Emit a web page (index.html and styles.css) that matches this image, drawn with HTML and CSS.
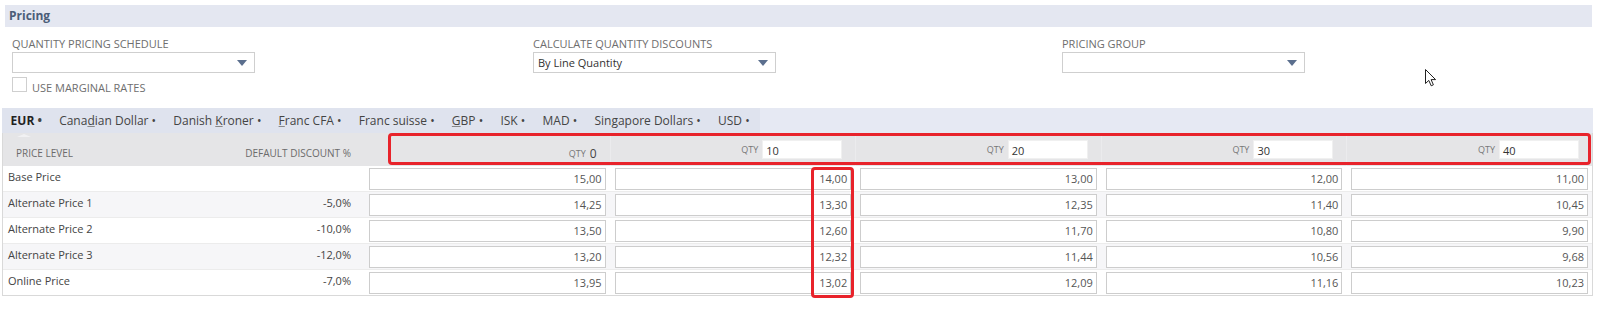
FILE: index.html
```html
<!DOCTYPE html>
<html lang="en">
<head>
    <meta charset="UTF-8">
    <title>Pricing</title>
    <link rel="stylesheet" href="styles.css">
</head>
<body>
    <div class="page">
        <div class="section-head">Pricing</div>

        <div class="fields">
            <div class="field">
                <div class="field-label">QUANTITY PRICING SCHEDULE</div>
                <div class="select"><span class="select-value"></span><span class="select-arrow"></span></div>
                <div class="check-row">
                    <span class="checkbox"></span>
                    <span class="check-label">USE MARGINAL RATES</span>
                </div>
            </div>
            <div class="field">
                <div class="field-label">CALCULATE QUANTITY DISCOUNTS</div>
                <div class="select"><span class="select-value">By Line Quantity</span><span class="select-arrow"></span></div>
            </div>
            <div class="field">
                <div class="field-label">PRICING GROUP</div>
                <div class="select"><span class="select-value"></span><span class="select-arrow"></span></div>
            </div>
        </div>

        <div class="tabbar">
            <div class="tabs">
                <span class="tab active">EUR <span class="dot">•</span></span>
                <span class="tab">Cana<u>d</u>ian Dollar <span class="dot">•</span></span>
                <span class="tab">Danish <u>K</u>roner <span class="dot">•</span></span>
                <span class="tab"><u>F</u>ranc CFA <span class="dot">•</span></span>
                <span class="tab">Franc suisse <span class="dot">•</span></span>
                <span class="tab"><u>G</u>BP <span class="dot">•</span></span>
                <span class="tab">ISK <span class="dot">•</span></span>
                <span class="tab">MAD <span class="dot">•</span></span>
                <span class="tab">Singapore Dollars <span class="dot">•</span></span>
                <span class="tab">USD <span class="dot">•</span></span>
            </div>
        </div>

        <div class="price-table">
            <div class="row head">
                <div class="cell name">PRICE LEVEL</div>
                <div class="cell discount">DEFAULT DISCOUNT %</div>
                <div class="cell qty"><span class="qty-label">QTY</span><span class="qty-zero">0</span></div>
                <div class="cell qty"><span class="qty-label">QTY</span><span class="qty-input">10</span></div>
                <div class="cell qty"><span class="qty-label">QTY</span><span class="qty-input">20</span></div>
                <div class="cell qty"><span class="qty-label">QTY</span><span class="qty-input">30</span></div>
                <div class="cell qty"><span class="qty-label">QTY</span><span class="qty-input">40</span></div>
            </div>
            <div class="row">
                <div class="cell name">Base Price</div>
                <div class="cell discount"></div>
                <div class="cell price"><span class="price-input">15,00</span></div>
                <div class="cell price"><span class="price-input">14,00</span></div>
                <div class="cell price"><span class="price-input">13,00</span></div>
                <div class="cell price"><span class="price-input">12,00</span></div>
                <div class="cell price"><span class="price-input">11,00</span></div>
            </div>
            <div class="row alt">
                <div class="cell name">Alternate Price 1</div>
                <div class="cell discount">-5,0%</div>
                <div class="cell price"><span class="price-input">14,25</span></div>
                <div class="cell price"><span class="price-input">13,30</span></div>
                <div class="cell price"><span class="price-input">12,35</span></div>
                <div class="cell price"><span class="price-input">11,40</span></div>
                <div class="cell price"><span class="price-input">10,45</span></div>
            </div>
            <div class="row">
                <div class="cell name">Alternate Price 2</div>
                <div class="cell discount">-10,0%</div>
                <div class="cell price"><span class="price-input">13,50</span></div>
                <div class="cell price"><span class="price-input">12,60</span></div>
                <div class="cell price"><span class="price-input">11,70</span></div>
                <div class="cell price"><span class="price-input">10,80</span></div>
                <div class="cell price"><span class="price-input">9,90</span></div>
            </div>
            <div class="row alt">
                <div class="cell name">Alternate Price 3</div>
                <div class="cell discount">-12,0%</div>
                <div class="cell price"><span class="price-input">13,20</span></div>
                <div class="cell price"><span class="price-input">12,32</span></div>
                <div class="cell price"><span class="price-input">11,44</span></div>
                <div class="cell price"><span class="price-input">10,56</span></div>
                <div class="cell price"><span class="price-input">9,68</span></div>
            </div>
            <div class="row last">
                <div class="cell name">Online Price</div>
                <div class="cell discount">-7,0%</div>
                <div class="cell price"><span class="price-input">13,95</span></div>
                <div class="cell price"><span class="price-input">13,02</span></div>
                <div class="cell price"><span class="price-input">12,09</span></div>
                <div class="cell price"><span class="price-input">11,16</span></div>
                <div class="cell price"><span class="price-input">10,23</span></div>
            </div>
        </div>

        <!-- red highlight boxes drawn over the table -->
        <div class="highlight qty-highlight"></div>
        <div class="highlight col-highlight"></div>

        <svg class="cursor" width="14" height="20" viewBox="0 0 14 20">
            <path d="M1.5 1.5 L1.5 15.5 L4.8 12.4 L7.2 17.8 L9.4 16.8 L7.1 11.6 L11.6 11.6 Z" fill="#fff" stroke="#222" stroke-width="1" stroke-linejoin="round"/>
        </svg>
    </div>
</body>
</html>
```

FILE: styles.css
```css
body {
    margin: 0;
    padding: 0;
    background-color: #fff;
    font-family: "Open Sans", "Liberation Sans", Arial, sans-serif;
    color: #444;
}
.page {
    position: relative;
    width: 1600px;
    height: 312px;
    overflow: hidden;
}
.section-head {
    margin: 5px 8px 0 5px;
    height: 22px;
    line-height: 22px;
    padding-left: 4px;
    background-color: #e4e7f1;
    color: #4b5d78;
    font-size: 12px;
    font-weight: bold;
}
.fields {
    display: grid;
    grid-template-columns: 521px 529px 1fr;
    margin-top: 10px;
    padding: 0 12px;
}
.field-label {
    font-size: 11px;
    line-height: 14px;
    color: #6e6e6e;
}
.select {
    position: relative;
    width: 243px;
    height: 21px;
    margin-top: 1px;
    box-sizing: border-box;
    border: 1px solid #cfcfcf;
    background-color: #fff;
    display: flex;
    align-items: center;
    padding-left: 4px;
}
.select-value {
    font-size: 11px;
    color: #333;
}
.select-arrow {
    position: absolute;
    right: 7px;
    top: 7px;
    width: 0;
    height: 0;
    border-left: 5px solid transparent;
    border-right: 5px solid transparent;
    border-top: 6px solid #5b6f8e;
}
.check-row {
    display: flex;
    align-items: flex-end;
    margin-top: 4px;
}
.checkbox {
    width: 15px;
    height: 15px;
    box-sizing: border-box;
    border: 1px solid #cfcfcf;
    background-color: #fff;
}
.check-label {
    margin-left: 5px;
    font-size: 11px;
    line-height: 13px;
    color: #6e6e6e;
    position: relative;
    top: 2px;
}
.tabbar {
    margin: 16px 7px 0 2px;
    height: 25px;
    background-color: #e6e9f3;
    display: flex;
}
.tabs {
    display: flex;
    align-items: center;
    padding-left: 0;
    padding-right: 2px;
    background-color: #dfe3ee;
}
.tab {
    position: relative;
    padding: 0 8.6px;
    font-size: 12px;
    color: #444;
    white-space: nowrap;
}
.tab u {
    text-decoration-color: #888;
}
.tab .dot {
    font-size: 12px;
    color: #444;
}
.tab.active {
    font-weight: bold;
    color: #222;
}
.tab.active::after {
    content: "";
    position: absolute;
    left: 15px;
    bottom: -8px;
    border-left: 7px solid transparent;
    border-right: 7px solid transparent;
    border-bottom: 3px solid #f1f1f3;
}
.price-table {
    margin: 0 7px 0 2px;
    border: 1px solid #d9d9d9;
    border-top: none;
}
.row {
    display: grid;
    grid-template-columns: 251px 110px repeat(5, 1fr);
    border-bottom: 1px solid #ececec;
    background-color: #fff;
}
.row.alt {
    background-color: #f6f6f8;
}
.row.last {
    border-bottom: none;
}
.cell {
    font-size: 11px;
    line-height: 14px;
    color: #444;
}
.row .name {
    padding: 4px 0 0 5px;
}
.row .discount {
    padding: 4px 13px 0 0;
    text-align: right;
}
.price {
    padding: 2px 4px 1px 5px;
}
.price-input {
    display: block;
    height: 22px;
    line-height: 20px;
    box-sizing: border-box;
    border: 1px solid #cdcdcd;
    background-color: #fff;
    text-align: right;
    padding-right: 3px;
    color: #555;
}
.row.head {
    height: 33px;
    background-color: #e5e5e7;
    border-bottom: none;
}
.head .cell {
    font-size: 10px;
    color: #6b6b6b;
    white-space: nowrap;
}
.head .name {
    padding: 0 0 6px 13px;
    align-self: end;
}
.head .discount {
    display: flex;
    justify-content: flex-end;
    padding: 0 13px 6px 0;
    align-self: end;
}
.head .qty {
    display: flex;
    justify-content: flex-end;
    align-items: center;
    padding-right: 13px;
    border-left: 1px solid #ebebed;
}
.qty-label {
    font-size: 9px;
    color: #777;
    margin-right: 4px;
}
.qty-zero {
    font-size: 12px;
    color: #444;
}
.head .qty:nth-child(3) {
    align-items: flex-end;
    padding-bottom: 5px;
    border-left: none;
}
.qty-input {
    width: 80px;
    height: 19px;
    line-height: 19px;
    box-sizing: border-box;
    padding-left: 3px;
    background-color: #fff;
    border: 1px solid #f0f0f0;
    font-size: 11px;
    color: #333;
}
.highlight {
    position: absolute;
    box-sizing: border-box;
    border: 3px solid #e8232b;
    border-radius: 4px;
}
.qty-highlight {
    left: 388px;
    top: 133px;
    width: 1203px;
    height: 32px;
}
.col-highlight {
    left: 811px;
    top: 167px;
    width: 43px;
    height: 131px;
}
.cursor {
    position: absolute;
    left: 1424px;
    top: 68px;
}
```
